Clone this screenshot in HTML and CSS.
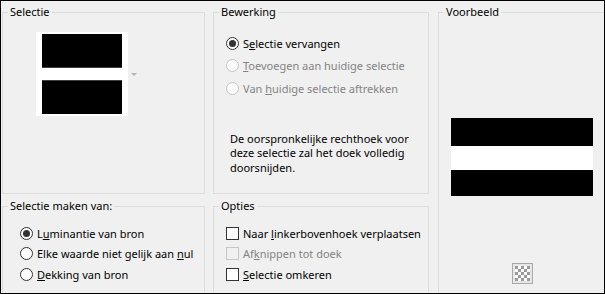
FILE: index.html
```html
<!DOCTYPE html>
<html lang="nl">
<head>
  <meta charset="UTF-8">
  <title>Selectie</title>
  <link rel="stylesheet" href="styles.css">
</head>
<body>
  <div class="dialog">
    <div class="layout">

      <!-- Selectie -->
      <fieldset class="group group-source">
        <legend>Selectie</legend>
        <div class="thumb-row">
          <div class="thumb">
            <div class="bar bar-top"></div>
            <div class="bar bar-bottom"></div>
          </div>
          <span class="drop-arrow"></span>
        </div>
      </fieldset>

      <!-- Bewerking -->
      <fieldset class="group group-mode">
        <legend>Bewerking</legend>
        <div class="options wide">
          <label class="option"><span class="radio checked"></span><span>S<u>e</u>lectie vervangen</span></label>
          <label class="option disabled"><span class="radio"></span><span><u>T</u>oevoegen aan huidige selectie</span></label>
          <label class="option disabled"><span class="radio"></span><span>Van <u>h</u>uidige selectie aftrekken</span></label>
        </div>
        <p class="note">De oorspronkelijke rechthoek voor deze selectie zal het doek volledig doorsnijden.</p>
      </fieldset>

      <!-- Voorbeeld -->
      <fieldset class="group group-preview">
        <legend>Voorbeeld</legend>
        <div class="preview">
          <div class="preview-image">
            <div class="p-black p-first"></div>
            <div class="p-white"></div>
            <div class="p-black p-last"></div>
          </div>
          <svg class="checker" width="21" height="21" viewBox="0 0 21 21">
            <rect x="0.5" y="0.5" width="20" height="20" fill="#e6e6e6" stroke="#a9a9a9"/>
            <rect x="3" y="3" width="15" height="15" fill="#ffffff"/>
            <rect x="3" y="3" width="3" height="3" fill="#9a9a9a"/>
            <rect x="9" y="3" width="3" height="3" fill="#9a9a9a"/>
            <rect x="15" y="3" width="3" height="3" fill="#9a9a9a"/>
            <rect x="6" y="6" width="3" height="3" fill="#9a9a9a"/>
            <rect x="12" y="6" width="3" height="3" fill="#9a9a9a"/>
            <rect x="3" y="9" width="3" height="3" fill="#9a9a9a"/>
            <rect x="9" y="9" width="3" height="3" fill="#9a9a9a"/>
            <rect x="15" y="9" width="3" height="3" fill="#9a9a9a"/>
            <rect x="6" y="12" width="3" height="3" fill="#9a9a9a"/>
            <rect x="12" y="12" width="3" height="3" fill="#9a9a9a"/>
            <rect x="3" y="15" width="3" height="3" fill="#9a9a9a"/>
            <rect x="9" y="15" width="3" height="3" fill="#9a9a9a"/>
            <rect x="15" y="15" width="3" height="3" fill="#9a9a9a"/>
          </svg>
        </div>
      </fieldset>

      <!-- Selectie maken van -->
      <fieldset class="group group-from">
        <legend>Selectie maken van:</legend>
        <div class="options compact">
          <label class="option"><span class="radio checked"></span><span>L<u>u</u>minantie van bron</span></label>
          <label class="option"><span class="radio"></span><span>Elke waarde niet gelijk aan <u>n</u>ul</span></label>
          <label class="option"><span class="radio"></span><span><u>D</u>ekking van bron</span></label>
        </div>
      </fieldset>

      <!-- Opties -->
      <fieldset class="group group-extra">
        <legend>Opties</legend>
        <div class="options compact">
          <label class="option"><span class="check"></span><span>Naar <u>l</u>inkerbovenhoek verplaatsen</span></label>
          <label class="option disabled"><span class="check"></span><span>Af<u>k</u>nippen tot doek</span></label>
          <label class="option"><span class="check"></span><span><u>S</u>electie omkeren</span></label>
        </div>
      </fieldset>

    </div>
  </div>
</body>
</html>
```

FILE: styles.css
```css
body {
  margin: 0;
  padding: 0;
  background-color: #f0f0f0;
  font-family: 'Noto Sans', sans-serif;
  font-size: 11px;
  color: #000;
}

  .dialog {
    width: 605px;
    height: 294px;
    box-sizing: border-box;
    border: 1px solid #000;
    background-color: #f0f0f0;
    overflow: hidden;
  }

  .layout {
    display: grid;
    grid-template-columns: 203px 216px 1fr;
    grid-template-rows: 190px 100px;
    column-gap: 8px;
    row-gap: 4px;
    padding: 3px 0 0 1px;
  }

  .group {
    margin: 0;
    padding: 0;
    min-width: 0;
    border: 1px solid #dcdcdc;
  }

  .group legend {
    margin-left: 5px;
    padding: 0 2px;
    line-height: 16px;
  }

  .group-preview {
    grid-column: 3;
    grid-row: 1 / 3;
    margin-left: 1px;
    margin-right: -3px;
  }

  /* Selectie thumbnail */
  .thumb-row {
    display: flex;
    align-items: center;
    margin: 12px 0 0 33px;
  }

  .thumb {
    background-color: #fff;
    padding: 2px 6px;
    width: 80px;
  }

  .bar {
    height: 33px;
    background-color: #000;
  }

  .bar-top {
    border-bottom: 1px solid #404040;
    margin-bottom: 12px;
  }

  .bar-bottom {
    border-top: 1px solid #404040;
  }

  .drop-arrow {
    margin-left: 3px;
    border-left: 3px solid transparent;
    border-right: 3px solid transparent;
    border-top: 3px solid #b4b4b4;
  }

  /* radio + checkbox rows */
  .options {
    display: flex;
    flex-direction: column;
    padding-left: 12px;
    margin-top: 12px;
  }

  .options.compact {
    margin-top: 9px;
  }

  .group-from .options {
    padding-left: 17px;
  }

  .option {
    display: flex;
    align-items: center;
    height: 22.5px;
    white-space: nowrap;
  }

  .compact .option {
    height: 20.5px;
  }

  .option.disabled {
    color: #838383;
  }

  .radio {
    width: 13px;
    height: 13px;
    box-sizing: border-box;
    border: 1px solid #333;
    border-radius: 50%;
    background-color: #fff;
    margin-right: 4px;
    display: flex;
    align-items: center;
    justify-content: center;
    flex: none;
  }

  .radio.checked::after {
    content: "";
    width: 7px;
    height: 7px;
    border-radius: 50%;
    background-color: #333;
  }

  .disabled .radio {
    border-color: #c6c6c6;
    background-color: #fcfcfc;
  }

  .check {
    width: 13px;
    height: 13px;
    box-sizing: border-box;
    border: 1px solid #333;
    background-color: #fff;
    margin-right: 4px;
    flex: none;
  }

  .disabled .check {
    border-color: #c6c6c6;
    background-color: #f0f0f0;
  }

  .note {
    margin: 32px 0 0 16px;
    width: 185px;
    line-height: 14.5px;
  }

  /* Voorbeeld */
  .preview {
    display: flex;
    flex-direction: column;
    align-items: center;
    width: 142px;
    margin: 98px 0 0 12px;
  }

  .preview-image {
    width: 142px;
  }

  .p-black {
    background-color: #000;
  }

  .p-first {
    height: 28px;
  }

  .p-white {
    height: 24px;
    background-color: #fff;
  }

  .p-last {
    height: 26px;
  }

  .checker {
    margin-top: 67px;
  }
```
